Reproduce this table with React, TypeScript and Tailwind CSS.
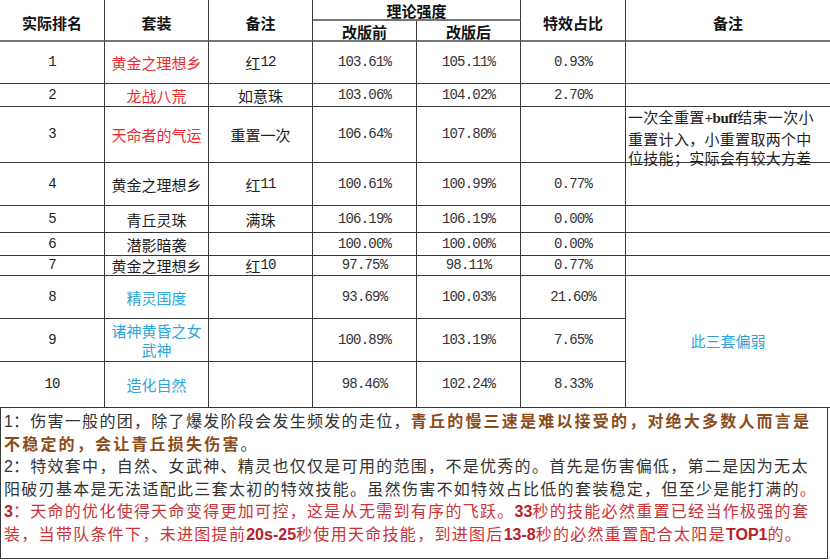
import type { ReactNode } from 'react';

const line = 'border-[#3a3a3a]';
const cjk = "font-['Noto_Sans_CJK_SC',sans-serif]";
const num = "font-['Liberation_Mono','Noto_Sans_CJK_SC',monospace] text-[14px] tracking-[-0.8px]";

type Row = {
  rank: string;
  suit: ReactNode;
  tone: 'red' | 'blue' | 'black';
  note: ReactNode;
  before: string;
  after: string;
  ratio: string;
};

const rows: Row[] = [
  { rank: '1', suit: '黄金之理想乡', tone: 'red', note: <>红<span className={num}>12</span></>, before: '103.61%', after: '105.11%', ratio: '0.93%' },
  { rank: '2', suit: '龙战八荒', tone: 'red', note: '如意珠', before: '103.06%', after: '104.02%', ratio: '2.70%' },
  { rank: '3', suit: '天命者的气运', tone: 'red', note: '重置一次', before: '106.64%', after: '107.80%', ratio: '' },
  { rank: '4', suit: '黄金之理想乡', tone: 'black', note: <>红<span className={num}>11</span></>, before: '100.61%', after: '100.99%', ratio: '0.77%' },
  { rank: '5', suit: '青丘灵珠', tone: 'black', note: '满珠', before: '106.19%', after: '106.19%', ratio: '0.00%' },
  { rank: '6', suit: '潜影暗袭', tone: 'black', note: '', before: '100.00%', after: '100.00%', ratio: '0.00%' },
  { rank: '7', suit: '黄金之理想乡', tone: 'black', note: <>红<span className={num}>10</span></>, before: '97.75%', after: '98.11%', ratio: '0.77%' },
  { rank: '8', suit: '精灵国度', tone: 'blue', note: '', before: '93.69%', after: '100.03%', ratio: '21.60%' },
  { rank: '9', suit: <>诸神黄昏之女<br />武神</>, tone: 'blue', note: '', before: '100.89%', after: '103.19%', ratio: '7.65%' },
  { rank: '10', suit: '造化自然', tone: 'blue', note: '', before: '98.46%', after: '102.24%', ratio: '8.33%' },
];

const toneClass = {
  red: 'text-[#ee2a2e]',
  blue: 'text-[#2ba4dc]',
  black: 'text-[#1e1e1e]',
};

function Cell({ children, className = '', last = false }: { children?: ReactNode; className?: string; last?: boolean }) {
  return (
    <div
      className={`flex items-center justify-center text-center border-b ${last ? '' : 'border-r'} ${line} ${className}`}
    >
      {children}
    </div>
  );
}

function Head({ children, className = '', last = false }: { children?: ReactNode; className?: string; last?: boolean }) {
  return (
    <Cell last={last} className={`${cjk} text-[15px] leading-[17px] font-bold text-[#111] border-b-2 border-b-[#777] ${className}`}>
      {children}
    </Cell>
  );
}

function App() {
  return (
    <div className="w-[830px] h-[560px] bg-white overflow-hidden">
      {/* Table */}
      <div className="grid grid-cols-[105px_104px_104px_104px_104px_105px_204px] grid-rows-[21px_21px_42px_23px_56px_43px_27px_23px_20px_43px_43px_46px]">
        <Head className="row-span-2 pt-1">实际排名</Head>
        <Head className="row-span-2 pt-1">套装</Head>
        <Head className="row-span-2 pt-1">备注</Head>
        <Head className="col-span-2 pt-[2px]">理论强度</Head>
        <Head className="row-span-2 pt-1">特效占比</Head>
        <Head className="row-span-2 pt-1" last>备注</Head>
        <Head className="pt-[2px]">改版前</Head>
        <Head className="pt-[2px]">改版后</Head>

        {rows.map((r, i) => (
          <div key={r.rank} className="contents">
            <Cell className={`${num} text-[#222]`}>{r.rank}</Cell>
            <Cell className={`${cjk} text-[15px] leading-[19px] ${toneClass[r.tone]}`}>{r.suit}</Cell>
            <Cell className={`${cjk} text-[15px] leading-[19px] text-[#1e1e1e]`}>{r.note}</Cell>
            <Cell className={`${num} text-[#333]`}>{r.before}</Cell>
            <Cell className={`${num} text-[#333]`}>{r.after}</Cell>
            <Cell className={`${num} text-[#333]`}>{r.ratio}</Cell>
            {i < 7 && (
              <Cell last className={i === 2 ? `!justify-start !items-start !text-left ${cjk} text-[15px] leading-[19.5px] tracking-[0.3px] text-[#1e1e1e] pl-[2px] whitespace-nowrap` : ''}>
                {i === 2 && (
                  <div>
                    一次全重置<span className="font-['Liberation_Serif',serif] font-bold tracking-[-0.5px]">+buff</span>结束一次小
                    <br />
                    重置计入，小重置取两个中
                    <br />
                    位技能；实际会有较大方差
                  </div>
                )}
              </Cell>
            )}
            {i === 7 && (
              <Cell last className={`row-span-3 ${cjk} text-[15px] text-[#2ba4dc]`}>
                此三套偏弱
              </Cell>
            )}
          </div>
        ))}
      </div>

      {/* Notes */}
      <div className={`w-[828px] h-[151px] border-l border-r border-b ${line} pl-[3px] pt-[3px] font-['Liberation_Sans','Noto_Sans_CJK_SC',sans-serif] text-[16px] leading-[22.6px] text-[#333] whitespace-nowrap`}>
        <div>
          1<span className="tracking-[1.3px]">：伤害一般的团，除了爆发阶段会发生频发的走位，</span>
          <span className="font-bold text-[#8b4c1c] tracking-[2.2px]">青丘的慢三速是难以接受的，对绝大多数人而言是</span>
        </div>
        <div>
          <span className="font-bold text-[#8b4c1c] tracking-[2.2px]">不稳定的，会让青丘损失伤害</span>
          <span>。</span>
        </div>
        <div>
          2<span className="tracking-[1.3px]">：特效套中，自然、女武神、精灵也仅仅是可用的范围，不是优秀的。首先是伤害偏低，第二是因为无太</span>
        </div>
        <div className="tracking-[1.3px]">
          阳破刃基本是无法适配此三套太初的特效技能。虽然伤害不如特效占比低的套装稳定，但至少是能打满的<span className="text-[#d0343a]">。</span>
        </div>
        <div className="text-[#cc3338]">
          <span className="font-bold text-[#b8202a]">3</span>
          <span className="tracking-[1.3px]">：天命的优化使得天命变得更加可控，这是从无需到有序的飞跃。</span>
          <span className="font-bold text-[#b8202a]">33</span>
          <span className="tracking-[1.3px]">秒的技能必然重置已经当作极强的套</span>
        </div>
        <div className="text-[#cc3338]">
          <span className="tracking-[1.3px]">装，当带队条件下，未进图提前</span>
          <span className="font-bold text-[#b8202a]">20s-25</span>
          <span className="tracking-[1.3px]">秒使用天命技能，到进图后</span>
          <span className="font-bold text-[#b8202a]">13-8</span>
          <span className="tracking-[1.3px]">秒的必然重置配合太阳是</span>
          <span className="font-bold text-[#b8202a]">TOP1</span>
          <span className="tracking-[1.3px]">的。</span>
        </div>
      </div>
    </div>
  );
}

export default App;
